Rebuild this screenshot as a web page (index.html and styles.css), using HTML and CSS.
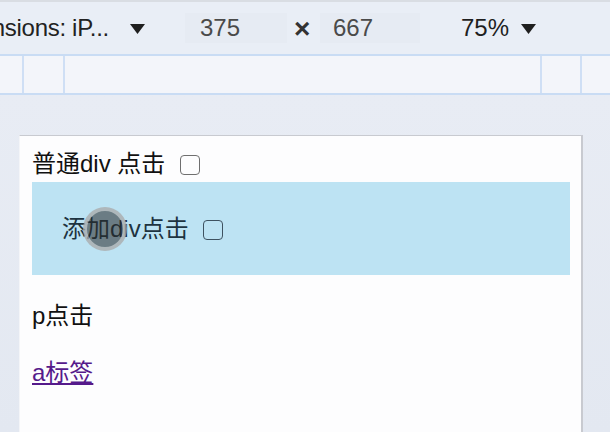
FILE: index.html
```html
<!DOCTYPE html>
<html lang="zh-CN">
<head>
    <meta charset="UTF-8">
    <meta name="viewport" content="width=device-width, initial-scale=1.0">
    <title>点击测试</title>
    <link rel="stylesheet" href="styles.css">
</head>
<body>
    <!-- device toolbar -->
    <div class="toolbar">
        <span class="device-name">Dimensions: iP...</span>
        <svg class="caret" width="15" height="10" viewBox="0 0 15 10"><polygon points="0,0 15,0 7.5,10" fill="#1f1f1f"/></svg>
        <span class="dim-box dim-width">375</span>
        <span class="times">×</span>
        <span class="dim-box dim-height">667</span>
        <span class="zoom">75%</span>
        <svg class="caret caret-zoom" width="15" height="10" viewBox="0 0 15 10"><polygon points="0,0 15,0 7.5,10" fill="#1f1f1f"/></svg>
    </div>

    <div class="ruler">
        <div class="seg seg-1"></div>
        <div class="seg seg-2"></div>
        <div class="seg seg-3"></div>
        <div class="seg seg-4"></div>
        <div class="seg seg-5"></div>
    </div>

    <div class="viewport">
        <div class="device">
            <div class="plain">普通div 点击 <input type="checkbox" class="check"></div>
            <div class="tap">
                添加div点击 <input type="checkbox" class="check check-dark">
                <span class="touch"></span>
            </div>
            <p>p点击</p>
            <p><a href="#" class="link">a标签</a></p>
        </div>
    </div>
</body>
</html>
```

FILE: styles.css
```css
/* Reset default margin and padding */
body {
    margin: 0;
    padding: 0;
    width: 610px;
    height: 432px;
    overflow: hidden;
    font-family: "Liberation Sans", "Noto Sans CJK SC", sans-serif;
    background-color: #e5eaf3;
    display: flex;
    flex-direction: column;
}

/* Device toolbar */
.toolbar {
    height: 52px;
    border-top: 2px solid #d9dde3;
    border-bottom: 2px solid #c9dcf4;
    background-color: #e9eef6;
    display: flex;
    align-items: center;
    font-size: 24px;
    color: #222;
    flex-shrink: 0;
}

.device-name {
    width: 188px;
    margin-left: -63px;
    white-space: nowrap;
    overflow: hidden;
    letter-spacing: -0.3px;
}

.caret {
    margin-left: 5px;
    margin-top: 2px;
}

.dim-box {
    height: 30px;
    line-height: 30px;
    background-color: #e6ebf3;
    color: #4a4a4a;
    box-sizing: border-box;
}

.dim-width {
    margin-left: 40px;
    width: 102px;
    padding-left: 15px;
}

.times {
    margin-left: 7px;
    width: 15px;
    font-size: 28px;
    font-weight: bold;
    color: #333;
    text-align: center;
    margin-top: 2px;
}

.dim-height {
    margin-left: 11px;
    width: 100px;
    padding-left: 13px;
}

.zoom {
    margin-left: 41px;
    color: #1f1f1f;
}

.caret-zoom {
    margin-left: 12px;
}

/* Ruler strip */
.ruler {
    height: 37px;
    background-color: #f3f5fa;
    border-bottom: 2px solid #c9dcf4;
    display: flex;
    flex-shrink: 0;
}

.seg {
    border-left: 2px solid #cfdff5;
}

.seg-1 {
    width: 22px;
    border-left: none;
}

.seg-2 {
    width: 39px;
}

.seg-3 {
    width: 475px;
}

.seg-4 {
    width: 38px;
}

.seg-5 {
    flex: 1;
}

/* Emulated page */
.viewport {
    flex: 1;
    padding: 40px 0 0 19px;
    background: linear-gradient(180deg, #e8ecf4, #e3e8f1);
}

.device {
    width: 564px;
    height: 100%;
    box-sizing: border-box;
    padding: 11px 11px 12px 12px;
    background-color: #fdfdfe;
    border-top: 1px solid #c8cad0;
    border-left: 1px solid #f4f5f8;
    border-right: 2px solid #c8cad0;
    font-size: 24px;
    line-height: 33px;
    color: #111;
}

.plain {
    height: 35px;
}

.check {
    appearance: none;
    -webkit-appearance: none;
    width: 20px;
    height: 20px;
    margin: 0 0 0 8px;
    border: 1.5px solid #6f6f6f;
    border-radius: 4px;
    vertical-align: -3px;
    box-sizing: border-box;
    background: transparent;
}

.tap {
    position: relative;
    padding: 30px;
    height: 33px;
    background-color: #bde3f3;
    color: #1d3340;
}

.check-dark {
    border-color: #3e5260;
}

.touch {
    position: absolute;
    left: 51px;
    top: 25px;
    width: 36px;
    height: 36px;
    border-radius: 50%;
    border: 4px solid rgba(255, 255, 255, 0.45);
    background-color: rgba(40, 40, 40, 0.55);
}

.device p {
    margin: 24px 0;
}

.link {
    color: #551a8b;
}
```
